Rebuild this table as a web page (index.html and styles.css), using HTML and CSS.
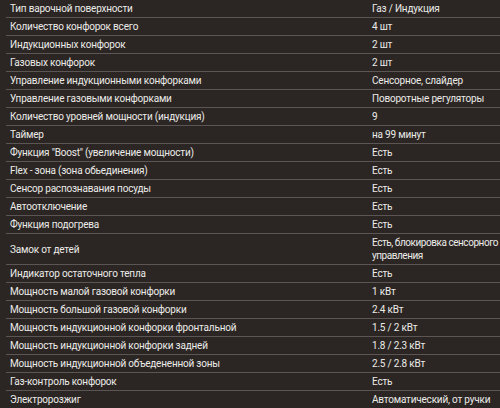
FILE: index.html
```html
<!DOCTYPE html>
<html lang="ru">
<head>
<meta charset="utf-8">
<link rel="stylesheet" href="styles.css">
</head>
<body>
<div class="wrap">
<table class="specs">
<tbody>
<tr><td class="name">Тип варочной поверхности</td><td class="val">Газ / Индукция</td></tr>
<tr><td class="name">Количество конфорок всего</td><td class="val">4 шт</td></tr>
<tr><td class="name">Индукционных конфорок</td><td class="val">2 шт</td></tr>
<tr><td class="name">Газовых конфорок</td><td class="val">2 шт</td></tr>
<tr><td class="name">Управление индукционными конфорками</td><td class="val">Сенсорное, слайдер</td></tr>
<tr><td class="name">Управление газовыми конфорками</td><td class="val">Поворотные регуляторы</td></tr>
<tr><td class="name">Количество уровней мощности (индукция)</td><td class="val">9</td></tr>
<tr><td class="name">Таймер</td><td class="val">на 99 минут</td></tr>
<tr><td class="name">Функция "Boost" (увеличение мощности)</td><td class="val">Есть</td></tr>
<tr><td class="name">Flex - зона (зона обьединения)</td><td class="val">Есть</td></tr>
<tr><td class="name">Сенсор распознавания посуды</td><td class="val">Есть</td></tr>
<tr><td class="name">Автоотключение</td><td class="val">Есть</td></tr>
<tr><td class="name">Функция подогрева</td><td class="val">Есть</td></tr>
<tr><td class="name">Замок от детей</td><td class="val nowrap">Есть, блокировка сенсорного<br>управления</td></tr>
<tr><td class="name">Индикатор остаточного тепла</td><td class="val">Есть</td></tr>
<tr><td class="name">Мощность малой газовой конфорки</td><td class="val">1 кВт</td></tr>
<tr><td class="name">Мощность большой газовой конфорки</td><td class="val">2.4 кВт</td></tr>
<tr><td class="name">Мощность индукционной конфорки фронтальной</td><td class="val">1.5 / 2 кВт</td></tr>
<tr><td class="name">Мощность индукционной конфорки задней</td><td class="val">1.8 / 2.3 кВт</td></tr>
<tr><td class="name">Мощность индукционной объедененной зоны</td><td class="val">2.5 / 2.8 кВт</td></tr>
<tr><td class="name">Газ-контроль конфорок</td><td class="val">Есть</td></tr>
<tr><td class="name">Электророзжиг</td><td class="val">Автоматический, от ручки</td></tr>
</tbody>
</table>
</div>
</body>
</html>
```

FILE: styles.css
```css
html, body {
  margin: 0;
  padding: 0;
  background: #2b2623;
  overflow: hidden;
}
body {
  font-family: Roboto, "Noto Sans", sans-serif;
  font-size: 10px;
  line-height: 13px;
  letter-spacing: -0.2px;
  color: #ecebe9;
}
.wrap {
  padding-left: 6px;
}
.specs {
  border-collapse: collapse;
  width: 494px;
  table-layout: fixed;
}
.specs td {
  padding: 2px 4px;
  border-bottom: 1px solid #5b5653;
  vertical-align: middle;
  text-align: left;
}
.specs .name {
  width: 354px;
}
.specs .val {
  width: 128px;
  padding-right: 0;
}
.specs .nowrap {
  white-space: nowrap;
  letter-spacing: -0.45px;
}
```
